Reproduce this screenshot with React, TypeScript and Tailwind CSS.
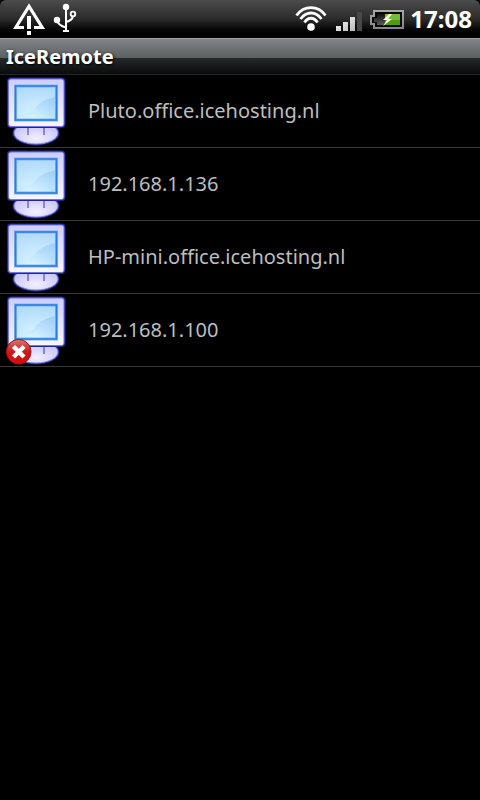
import { clsx } from "clsx";

const hosts = [
  { name: "Pluto.office.icehosting.nl", online: true },
  { name: "192.168.1.136", online: true },
  { name: "HP-mini.office.icehosting.nl", online: true },
  { name: "192.168.1.100", online: false },
];

function WarningIcon() {
  return (
    <svg width="32" height="32" viewBox="0 0 32 32" aria-label="Warning">
      <path d="M11 24.500H2.800L16 3.200l13.200 21.300H21" fill="none" stroke="#fff" strokeWidth="3.2" />
      <path d="M14 13h4v13h-4zM14 28h4v4h-4z" fill="#fff" />
    </svg>
  );
}

function UsbIcon() {
  return (
    <svg width="24" height="32" viewBox="0 0 24 32" aria-label="USB connected">
      <g fill="none" stroke="#fff" strokeWidth="2">
        <path d="M13 4v24" />
        <path d="M4 17c1 5 5 6.500 9 7.500" />
        <path d="M13 19c4-1 6.500-3 7-6" />
        <circle cx="20" cy="11" r="2.300" strokeWidth="1.800" />
        <path d="M10 28h6" />
      </g>
      <circle cx="13" cy="4" r="3.200" fill="#fff" />
      <circle cx="4" cy="17" r="3.200" fill="#fff" />
    </svg>
  );
}

function WifiIcon() {
  return (
    <svg width="32" height="26" viewBox="0 0 32 26" aria-label="Wi-Fi">
      <g fill="none" stroke="#fff" strokeWidth="2.800">
        <path d="M1.500 9.500C9 -1 23 -1 30.500 9.500" />
        <path d="M5.500 13C11.500 5 20.500 5 26.500 13" />
        <path d="M9.500 16.500C13 10.800 19 10.800 22.500 16.500" />
      </g>
      <circle cx="16" cy="21" r="3.800" fill="#fff" />
    </svg>
  );
}

function SignalIcon() {
  return (
    <svg width="26" height="20" viewBox="0 0 26 20" aria-label="Signal strength">
      <defs>
        <linearGradient id="bar" x1="0" y1="0" x2="1" y2="1">
          <stop offset="0" stopColor="#fff" />
          <stop offset="1" stopColor="#b8b8b8" />
        </linearGradient>
      </defs>
      <path d="M0 15h5v5H0zM7 11h5v9H7zM14 6h5v14h-5z" fill="url(#bar)" />
      <path d="M21 1h5v19h-5z" fill="#484848" />
    </svg>
  );
}

function BatteryIcon() {
  return (
    <svg width="34" height="20" viewBox="0 0 34 20" aria-label="Battery charging">
      <defs>
        <linearGradient id="frame" x1="0" y1="0" x2="0" y2="1">
          <stop offset="0" stopColor="#aaa" />
          <stop offset="1" stopColor="#858585" />
        </linearGradient>
        <linearGradient id="empty" x1="0" y1="0" x2="0" y2="1">
          <stop offset="0" stopColor="#101010" />
          <stop offset="1" stopColor="#5a5a5a" />
        </linearGradient>
      </defs>
      <path d="M3 0h31v19H3v-4H0V5h3zM5 2v5H2v6h3v4h27V2z" fill="url(#frame)" fillRule="evenodd" />
      <path d="M5 2h27v15H5v-4H2V7h3z" fill="#080808" />
      <path d="M7 4h9v11H7v-3H4V8h3z" fill="url(#empty)" />
      <path d="M15 4h15v6H15z" fill="#74bd3b" />
      <path d="M15 10h15v5H15z" fill="#4e9d0c" />
      <path d="M19 4l-6 6h4l-4 6 9-7h-4l4-5z" fill="#fff" />
    </svg>
  );
}

function ComputerIcon({ online }: { online: boolean }) {
  return (
    <svg
      width="72"
      height="72"
      viewBox="0 0 72 72"
      role="img"
      aria-label={online ? "Online" : "Offline"}
      className="shrink-0"
    >
      <defs>
        <linearGradient id="case" x1="0" y1="0" x2="0" y2="1">
          <stop offset="0" stopColor="#cdcdfc" />
          <stop offset="1" stopColor="#f7f6ff" />
        </linearGradient>
        <radialGradient id="base" cx="0.5" cy="0.75" r="0.6">
          <stop offset="0" stopColor="#f3f0ff" />
          <stop offset="1" stopColor="#c9c6fa" />
        </radialGradient>
        <radialGradient id="screen" cx="0.5" cy="1" r="1">
          <stop offset="0" stopColor="#dcf7ff" />
          <stop offset="1" stopColor="#b0dafb" />
        </radialGradient>
        <linearGradient id="shade" x1="1" y1="0" x2="0.2" y2="1">
          <stop offset="0" stopColor="#7fbdf5" stopOpacity="0.5" />
          <stop offset="1" stopColor="#7fbdf5" stopOpacity="0" />
        </linearGradient>
        <linearGradient id="badge" x1="0" y1="0" x2="0" y2="1">
          <stop offset="0" stopColor="#d77" />
          <stop offset="0.5" stopColor="#c81a1a" />
          <stop offset="1" stopColor="#d80c0c" />
        </linearGradient>
      </defs>
      <ellipse cx="36" cy="58" rx="22" ry="11" fill="none" stroke="#23298c" strokeWidth="3" />
      <ellipse cx="36" cy="58" rx="22" ry="11" fill="url(#base)" stroke="#8184e6" strokeWidth="1" />
      <path d="M28 52v8M44 52v8" stroke="#6a6ad8" strokeWidth="1.500" />
      <rect x="8.500" y="4" width="55.500" height="47.500" rx="2.500" fill="none" stroke="#23298c" strokeWidth="3" />
      <rect x="8.500" y="4" width="55.500" height="47.500" rx="2.500" fill="url(#case)" stroke="#7075e0" strokeWidth="1" />
      <rect x="15.500" y="11" width="41" height="34" fill="url(#screen)" stroke="#7fb2f2" strokeWidth="3" />
      <path d="M56 22c-10 2-16 5-20 10-3 4-7 6-11 6v6h31z" fill="url(#shade)" />
      <rect x="15.500" y="11" width="41" height="34" fill="none" stroke="#2b7be0" strokeWidth="1.500" />
      {!online && (
        <g>
          <circle cx="18.700" cy="57.700" r="12.300" fill="url(#badge)" stroke="#a31212" />
          <path d="M13.500 52.500l10.500 10.500M24 52.500L13.500 63" stroke="#fff" strokeWidth="4.500" />
        </g>
      )}
    </svg>
  );
}

export default function App() {
  return (
    <div className="min-h-screen bg-black font-['Noto_Sans','Open_Sans',sans-serif]">
      {/* Status bar */}
      <header className="flex h-[38px] items-center justify-between rounded-t-md bg-linear-to-b from-[#4c4c4c] from-0% via-[#2b2b2b] via-50% to-black px-2 pl-[13px]">
        <div className="flex items-center gap-2">
          <WarningIcon />
          <UsbIcon />
        </div>
        <div className="flex items-center gap-1.5">
          <div className="flex items-center gap-2">
            <WifiIcon />
            <span className="pt-1 pl-px">
              <SignalIcon />
            </span>
            <span className="pt-0.5">
              <BatteryIcon />
            </span>
          </div>
          <time className="text-2xl leading-8 font-bold text-white">17:08</time>
        </div>
      </header>

      {/* Title bar */}
      <div className="flex h-[37px] flex-col justify-center border-t border-b border-t-[#a2a4a4] border-b-[#222626] bg-[linear-gradient(#828688,#5c5f60_54%,#262a2b_54%,#0a0b0b)] px-1.5">
        <h1 className="text-xl leading-8 font-bold text-white [text-shadow:1px_1px_3px_#000]">IceRemote</h1>
      </div>

      <ul>
        {hosts.map((host) => (
          <li key={host.name} className="border-b border-[#393939]">
            <button
              type="button"
              className={clsx("flex w-full items-center gap-4 text-left", "active:bg-[#222]")}
            >
              <ComputerIcon online={host.online} />
              <span className="text-xl leading-7 text-[#bebebe]">{host.name}</span>
            </button>
          </li>
        ))}
      </ul>
    </div>
  );
}
